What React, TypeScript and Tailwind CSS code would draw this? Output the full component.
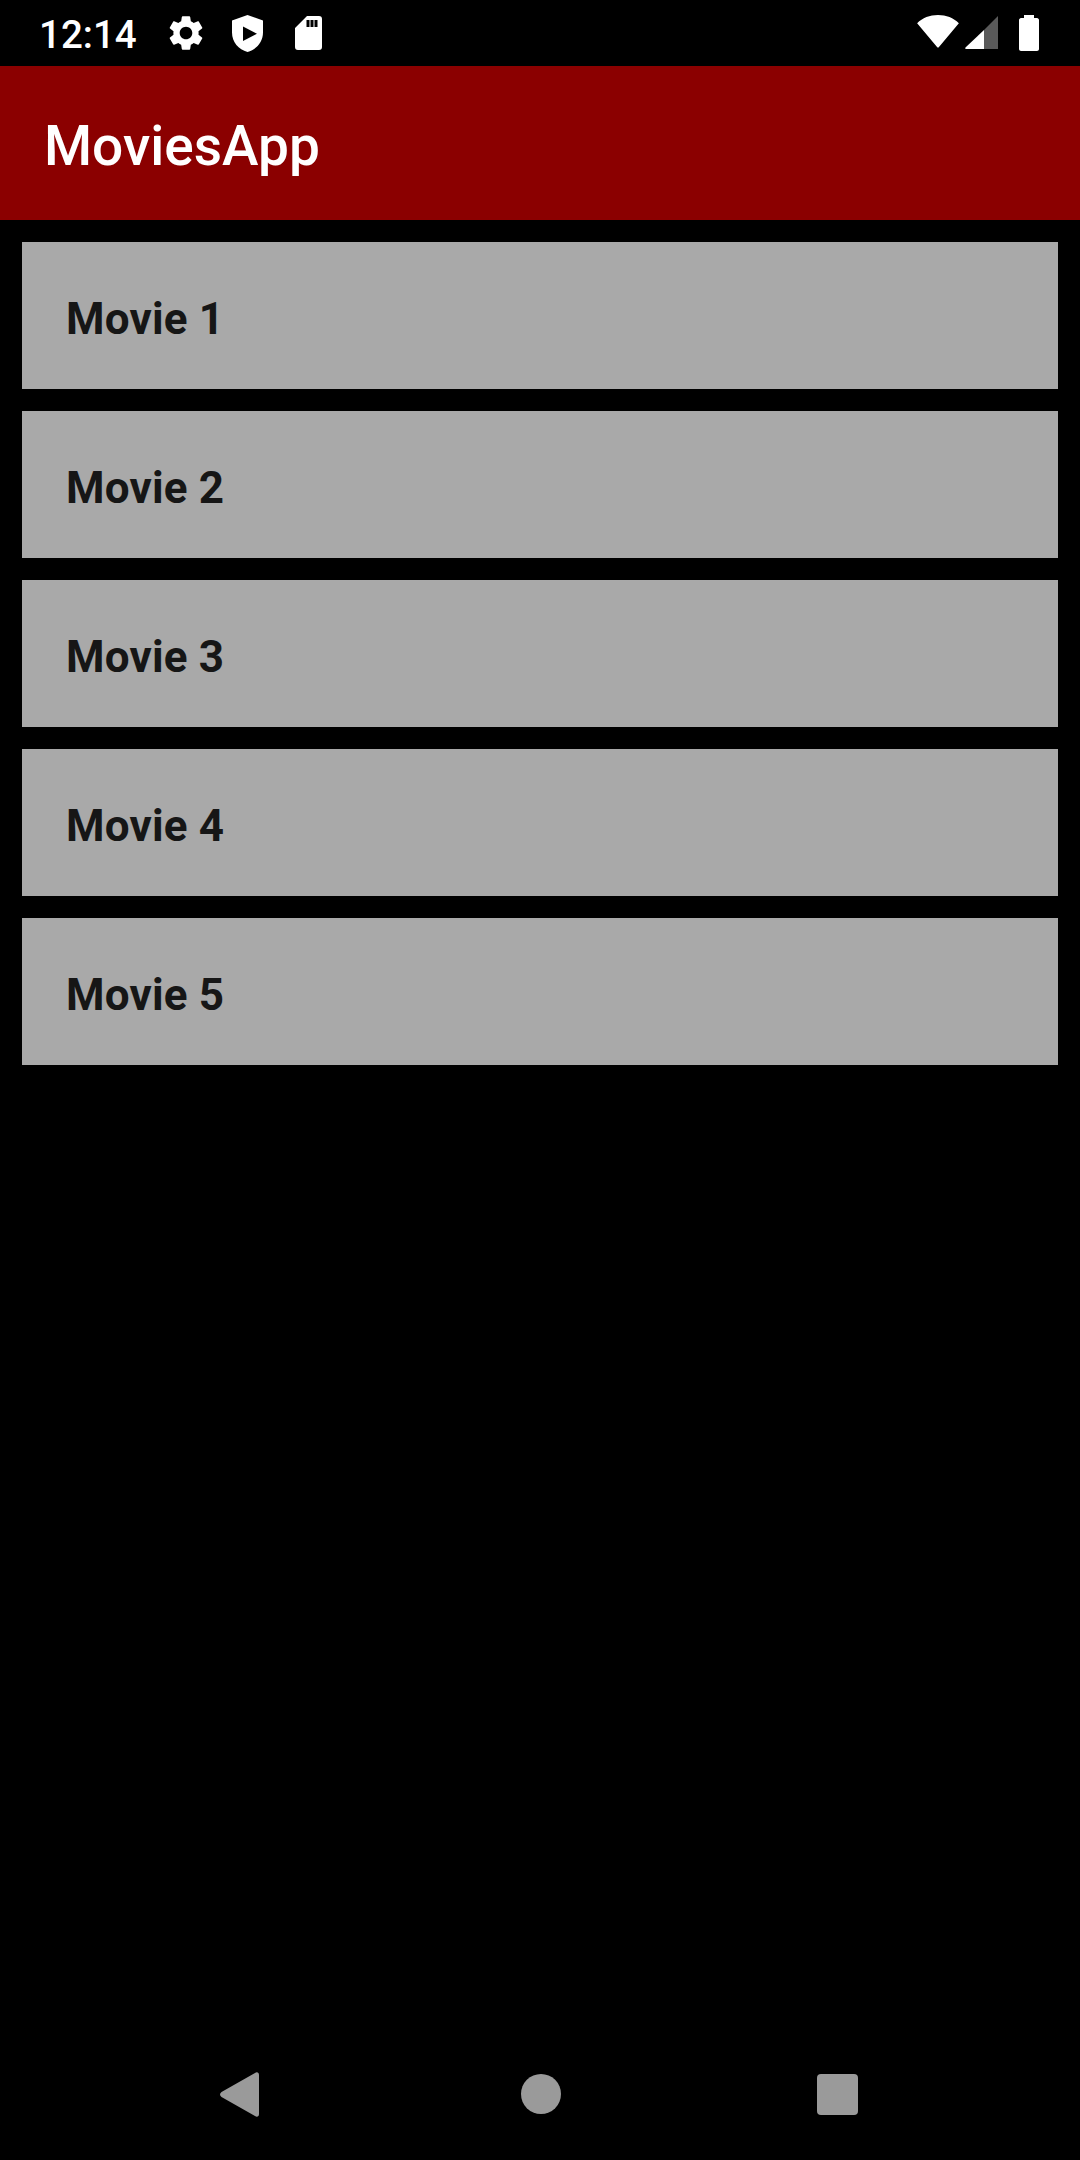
const movies = ["Movie 1", "Movie 2", "Movie 3", "Movie 4", "Movie 5"];

function StatusBar() {
  return (
    <div className="flex h-[66px] items-center bg-black pl-[39px] pr-[41px] text-white">
      <span className="w-[126px] pt-[3px] text-[38.5px] leading-[63px] font-medium">12:14</span>
      {/* settings */}
      <svg className="h-[42px] w-[42px]" viewBox="0 0 24 24" fill="currentColor">
        <path d="M19.14 12.94c.04-.3.06-.61.06-.94 0-.32-.02-.64-.07-.94l2.03-1.58c.18-.14.23-.41.12-.61l-1.92-3.32c-.12-.22-.37-.29-.59-.22l-2.39.96c-.5-.38-1.03-.7-1.62-.94l-.36-2.54c-.04-.24-.24-.41-.48-.41h-3.84c-.24 0-.43.17-.47.41l-.36 2.54c-.59.24-1.13.57-1.62.94l-2.39-.96c-.22-.08-.47 0-.59.22L2.74 8.87c-.12.21-.08.47.12.61l2.03 1.58c-.05.3-.09.63-.09.94s.02.64.07.94l-2.03 1.58c-.18.14-.23.41-.12.61l1.92 3.32c.12.22.37.29.59.22l2.39-.96c.5.38 1.03.7 1.62.94l.36 2.54c.05.24.24.41.48.41h3.84c.24 0 .44-.17.47-.41l.36-2.54c.59-.24 1.13-.56 1.62-.94l2.39.96c.22.08.47 0 .59-.22l1.92-3.32c.12-.22.07-.47-.12-.61l-2.01-1.58zM12 15.6c-1.98 0-3.6-1.62-3.6-3.6s1.62-3.6 3.6-3.6 3.6 1.62 3.6 3.6-1.62 3.6-3.6 3.6z" />
      </svg>
      {/* play protect */}
      <svg className="ml-[25px] h-[37px] w-[31px]" viewBox="0 0 31 37" fill="currentColor">
        <path
          fillRule="evenodd"
          d="M15.5 0 L31 5.5 V17.5 C31 27 24.5 34.5 15.5 37 C6.5 34.5 0 27 0 17.5 V5.5 Z M11 11.5 V26 L25 18.75 Z"
        />
      </svg>
      {/* sd card */}
      <svg className="ml-[32px] h-[34px] w-[27px]" viewBox="0 0 27 34" fill="currentColor">
        <path
          fillRule="evenodd"
          d="M12 0 H24 C26 0 27 1 27 3 V31 C27 33 26 34 24 34 H3 C1 34 0 33 0 31 V12 Z M11.5 4 V11 H14.5 V4 Z M15.5 4 V11 H18.5 V4 Z M19.5 4 V11 H22.5 V4 Z"
        />
      </svg>
      <div className="ml-auto flex items-center">
        {/* wifi */}
        <svg className="mb-[3px] h-[33px] w-[44px]" viewBox="0 0 44 34" fill="currentColor">
          <path d="M0.5 8.5 C6 3 13.5 0 22 0 C30.5 0 38 3 43.5 8.5 L23 33 C22.5 33.7 21.5 33.7 21 33 Z" />
        </svg>
        {/* signal */}
        <svg className="ml-[5px] h-[34px] w-[34px]" viewBox="0 0 34 34">
          <path d="M33 0 V33 H19 V14 Z" fill="#5a5a5a" />
          <path d="M19 14 V33 H1 C0 33 0 32 0.5 31.5 Z" fill="white" />
        </svg>
        {/* battery */}
        <svg className="ml-[20px] h-[36px] w-[20px]" viewBox="0 0 20 36" fill="currentColor">
          <path d="M5 0 H15 V3 H18 C19 3 20 4 20 5 V34 C20 35 19 36 18 36 H2 C1 36 0 35 0 34 V5 C0 4 1 3 2 3 H5 Z" />
        </svg>
      </div>
    </div>
  );
}

function NavBar() {
  return (
    <div className="flex h-[132px] items-center bg-black pl-[220px]">
      <svg className="h-[45px] w-[39px]" viewBox="0 0 39 45" fill="#9a9a9a">
        <path d="M39 3 V42 C39 44.5 37 45.5 35 44 L1.5 25 C-0.5 23.5 -0.5 21.5 1.5 20 L35 1 C37 -0.5 39 0.5 39 3 Z" />
      </svg>
      <div className="ml-[262px] h-[40px] w-[40px] rounded-full bg-[#9a9a9a]" />
      <div className="ml-[256px] h-[41px] w-[41px] rounded-[4px] bg-[#9a9a9a]" />
    </div>
  );
}

export default function App() {
  return (
    <div className="flex h-[2160px] w-[1080px] flex-col overflow-hidden bg-black font-[Roboto,sans-serif]">
      <StatusBar />
      <header className="flex h-[154px] items-center bg-[#8b0000] px-[44px] pt-[6px]">
        <h1 className="text-[55px] leading-[64px] font-medium text-white">MoviesApp</h1>
      </header>
      <main className="flex flex-1 flex-col gap-[22px] p-[22px]">
        {movies.map((title) => (
          <div key={title} className="flex h-[147px] items-center bg-[#a9a9a9] px-[44px] pt-[6px]">
            <span className="text-[44px] leading-[58px] font-bold tracking-[0.2px] text-[#161616]">{title}</span>
          </div>
        ))}
      </main>
      <NavBar />
    </div>
  );
}
